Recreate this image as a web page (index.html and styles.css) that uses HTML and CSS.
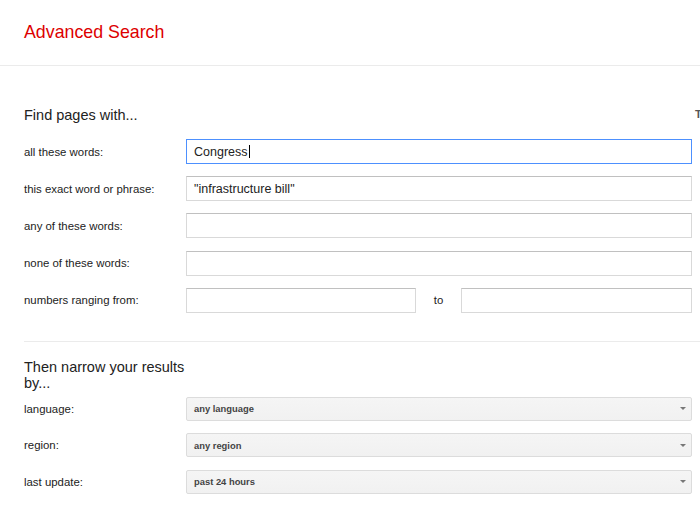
FILE: index.html
```html
<!DOCTYPE html>
<html lang="en">
<head>
<meta charset="utf-8">
<title>Advanced Search</title>
<link rel="stylesheet" href="styles.css">
</head>
<body>
<header class="hdr">
  <h1 class="title">Advanced Search</h1>
</header>
<main class="main">
  <section class="sec">
    <div class="sec-head">
      <h2 class="sec-title">Find pages with...</h2>
      <span class="side">To do this in the search box</span>
    </div>
    <div class="rows">
      <label class="lbl">all these words:</label>
      <div class="inp focused">Congress<span class="caret"></span></div>

      <label class="lbl">this exact word or phrase:</label>
      <div class="inp">"infrastructure bill"</div>

      <label class="lbl">any of these words:</label>
      <div class="inp"></div>

      <label class="lbl">none of these words:</label>
      <div class="inp"></div>

      <label class="lbl">numbers ranging from:</label>
      <div class="range">
        <div class="inp inp-from"></div>
        <span class="to">to</span>
        <div class="inp inp-to"></div>
      </div>
    </div>
  </section>

  <div class="divider"></div>

  <section class="sec">
    <div class="sec-head sec-head-2">
      <h2 class="sec-title narrow">Then narrow your results by...</h2>
    </div>
    <div class="rows rows-sel">
      <label class="lbl">language:</label>
      <div class="sel"><span>any language</span><span class="arrow"></span></div>

      <label class="lbl">region:</label>
      <div class="sel"><span>any region</span><span class="arrow"></span></div>

      <label class="lbl">last update:</label>
      <div class="sel"><span>past 24 hours</span><span class="arrow"></span></div>
    </div>
  </section>
</main>
</body>
</html>
```

FILE: styles.css
```css
html, body {
  margin: 0;
  padding: 0;
  width: 700px;
  height: 505px;
  overflow: hidden;
  background: #fff;
}

body {
  font-family: "Liberation Sans", Arial, sans-serif;
  color: #222;
}

.hdr {
  box-sizing: border-box;
  height: 66px;
  padding: 22px 0 0 24px;
  border-bottom: 1px solid #ebebeb;
}

.title {
  margin: 0;
  font-size: 17.8px;
  line-height: 20px;
  font-weight: normal;
  color: #dd0000;
}

.main {
  padding-left: 24px;
}

.sec-head {
  display: flex;
  align-items: flex-start;
  padding-top: 41px;
  margin-bottom: 16px;
}

.sec-title {
  flex: 0 0 668px;
  margin: 0;
  font-size: 14.5px;
  line-height: 16px;
  font-weight: normal;
  color: #222;
}

.sec-title.narrow {
  flex-basis: 162px;
}

.side {
  flex-shrink: 0;
  white-space: nowrap;
  margin-left: 3px;
  margin-top: 1px;
  font-size: 11px;
  line-height: 12px;
  font-weight: bold;
  color: #555;
}

.rows {
  display: grid;
  grid-template-columns: 162px 506px;
  row-gap: 12.2px;
  align-items: center;
}

.lbl {
  font-size: 11.4px;
  color: #222;
}

.inp {
  box-sizing: border-box;
  height: 25px;
  padding: 0 7px;
  display: flex;
  align-items: center;
  border: 1px solid #d9d9d9;
  border-top-color: #c0c0c0;
  background: #fff;
  font-size: 12.5px;
  color: #222;
}

.inp.focused {
  border-color: #4d90fe;
}

.caret {
  display: inline-block;
  width: 1px;
  height: 13px;
  margin-left: 1px;
  background: #000;
}

.range {
  display: flex;
  align-items: center;
}

.inp-from {
  width: 230px;
}

.inp-to {
  width: 231px;
}

.to {
  flex: 1;
  text-align: center;
  font-size: 11.4px;
  color: #222;
}

.divider {
  margin-top: 28px;
  border-top: 1px solid #ebebeb;
}

.sec-head-2 {
  padding-top: 17px;
  margin-bottom: 6px;
}

.rows-sel {
  row-gap: 12.5px;
}

.sel {
  box-sizing: border-box;
  height: 24px;
  padding: 0 5px 0 7px;
  display: flex;
  align-items: center;
  justify-content: space-between;
  border: 1px solid #dcdcdc;
  border-radius: 2px;
  background: linear-gradient(#f5f5f5, #f1f1f1);
  font-size: 9.4px;
  font-weight: bold;
  color: #444;
}

.arrow {
  width: 0;
  height: 0;
  border-left: 3px solid transparent;
  border-right: 3px solid transparent;
  border-top: 3px solid #777;
}
```
